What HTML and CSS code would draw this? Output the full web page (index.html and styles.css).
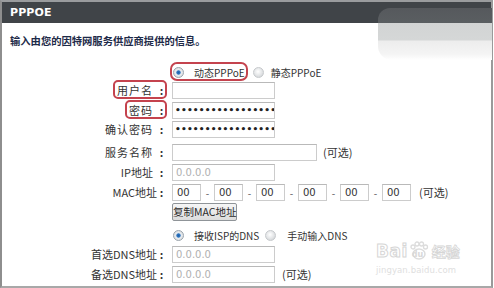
FILE: index.html
```html
<!DOCTYPE html>
<html lang="zh-CN">
<head>
<meta charset="utf-8">
<title>PPPOE</title>
<link rel="stylesheet" href="styles.css">
</head>
<body>
<div class="panel">
  <div class="header">PPPOE</div>
  <div class="intro">输入由您的因特网服务供应商提供的信息。</div>
  <div class="form">
    <div class="label g0"></div>
    <div class="field g0">
      <span class="mark-opt"><span class="radio on"></span><span class="opt first">动态PPPoE</span></span>
      <span class="radio off second"></span><span class="opt">静态PPPoE</span>
    </div>

    <div class="label g0"><span class="mark-l">用户名<span class="colon sp">:</span></span></div>
    <div class="field g0"><div class="box"></div></div>

    <div class="label g2"><span class="mark-l">密码<span class="colon sp">:</span></span></div>
    <div class="field g2"><div class="box dots">•••••••••••••••••</div></div>

    <div class="label g1">确认密码<span class="colon sp">:</span></div>
    <div class="field g1"><div class="box dots">•••••••••••••••••</div></div>

    <div class="label g5">服务名称<span class="colon sp">:</span></div>
    <div class="field g5"><div class="box wide"></div><span class="note">(可选)</span></div>

    <div class="label latin g2">IP地址<span class="colon sp">:</span></div>
    <div class="field g2"><div class="box ph">0.0.0.0</div></div>

    <div class="label latin g2">MAC地址<span class="colon">:</span></div>
    <div class="field g2 mac">
      <div class="box small">00</div><span class="sep">-</span>
      <div class="box small">00</div><span class="sep">-</span>
      <div class="box small">00</div><span class="sep">-</span>
      <div class="box small">00</div><span class="sep">-</span>
      <div class="box small">00</div><span class="sep">-</span>
      <div class="box small">00</div><span class="note mac-note">(可选)</span>
    </div>

    <div class="label g2"></div>
    <div class="field g2"><button class="btn" type="button">复制MAC地址</button></div>

    <div class="label g5"></div>
    <div class="field g5">
      <span class="radio on"></span><span class="opt first">接收ISP的DNS</span>
      <span class="radio off second dns2"></span><span class="opt dns2-label">手动输入DNS</span>
    </div>

    <div class="label latin g1">首选DNS地址<span class="colon">:</span></div>
    <div class="field g1"><div class="box ph">0.0.0.0</div></div>

    <div class="label latin g2">备选DNS地址<span class="colon">:</span></div>
    <div class="field g2"><div class="box ph">0.0.0.0</div><span class="note note-dns">(可选)</span></div>
  </div>

  <div class="blur-top"></div>
  <div class="watermark">
    <div class="wm-logo">
      <span class="wm-bai">Bai</span>
      <svg class="wm-paw" width="20" height="20" viewBox="0 0 20 20">
        <ellipse cx="10" cy="13" rx="6" ry="5" fill="none" stroke="#dcdcdc" stroke-width="1.5"/>
        <circle cx="4" cy="6" r="2" fill="none" stroke="#dcdcdc" stroke-width="1.3"/>
        <circle cx="8" cy="3" r="2" fill="none" stroke="#dcdcdc" stroke-width="1.3"/>
        <circle cx="12.5" cy="3" r="2" fill="none" stroke="#dcdcdc" stroke-width="1.3"/>
        <circle cx="16.5" cy="6" r="2" fill="none" stroke="#dcdcdc" stroke-width="1.3"/>
      </svg>
      <span class="wm-du">du</span>
      <span class="wm-jy">经验</span>
    </div>
    <div class="wm-url">jingyan.baidu.com</div>
  </div>
</div>
</body>
</html>
```
FILE: styles.css
```css
html, body {
  margin: 0;
  padding: 0;
  background: #ffffff;
}

body {
  width: 494px;
  height: 288px;
  overflow: hidden;
  font-family: "Noto Sans CJK SC", "Liberation Sans", sans-serif;
  color: #333333;
}

.panel {
  position: relative;
  width: 489px;
  height: 284px;
  border-left: 2px solid #8e8e8e;
  border-right: 2px solid #9a9a9a;
  border-bottom: 2px solid #a8a8a8;
  border-top: 2px solid #9a9c9e;
  box-sizing: content-box;
}

.header {
  height: 21px;
  background: #404448;
  color: #ffffff;
  font-family: "DejaVu Sans", sans-serif;
  font-weight: bold;
  font-size: 11px;
  line-height: 21px;
  padding-left: 8px;
  letter-spacing: 0.1px;
}

.intro {
  margin-top: 10px;
  padding-left: 8px;
  height: 16px;
  line-height: 16px;
  font-size: 10.3px;
  font-weight: bold;
  color: #1d2a48;
}

.form {
  display: grid;
  grid-template-columns: 164px 1fr;
  column-gap: 6px;
  margin-top: 14px;
}

.label {
  height: 18px;
  line-height: 18px;
  font-size: 11px;
  letter-spacing: 1px;
  text-align: right;
  color: #333;
  white-space: nowrap;
}

.label.latin {
  letter-spacing: 0;
}

.field {
  height: 18px;
  display: flex;
  align-items: center;
  font-size: 11px;
  color: #333;
  white-space: nowrap;
}

.g0 { margin-top: 0; }
.g1 { margin-top: 1px; }
.g2 { margin-top: 2px; }
.g5 { margin-top: 5px; }

.colon {
  display: inline-block;
  width: 9px;
  text-align: center;
  font-weight: bold;
  letter-spacing: 0;
}

.colon.sp {
  margin-left: 4px;
}

.mark-l {
  position: relative;
  display: inline-block;
  padding-left: 3px;
}

.mark-l::after {
  content: "";
  position: absolute;
  left: -1px;
  right: -1px;
  top: -1px;
  bottom: 0;
  border: 2px solid #c4434e;
  border-radius: 5px;
}

.mark-opt {
  position: relative;
  display: inline-flex;
  align-items: center;
  height: 18px;
}

.mark-opt::after {
  content: "";
  position: absolute;
  left: -2px;
  right: -3px;
  top: -1px;
  bottom: 0;
  border: 2px solid #c4434e;
  border-radius: 7px;
}

.radio {
  display: inline-block;
  width: 11px;
  height: 11px;
  border-radius: 50%;
  margin-left: 1px;
  box-sizing: border-box;
  border: 1px solid #b8bcc0;
  background: radial-gradient(circle at 50% 45%, #ffffff 0, #e6e8ea 60%, #cfd3d6 100%);
}

.radio.on {
  background: radial-gradient(circle at 50% 50%, #1d5fa8 0, #2f77c2 28%, #e9ecef 40%, #d3d7db 100%);
  border-color: #9aa3ab;
}

.radio.off {
  border-color: #c6c9cc;
  background: radial-gradient(circle at 45% 40%, #ffffff 0, #e2e4e6 55%, #c9ccce 100%);
}

.opt {
  font-size: 10px;
  color: #333;
}

.opt.first {
  margin-left: 10px;
}

.radio.second {
  margin-left: 8px;
  margin-right: 7px;
}

.radio.dns2 {
  margin-left: 6px;
  margin-right: 11px;
}

.box {
  box-sizing: border-box;
  width: 103px;
  height: 17px;
  border: 1px solid #cccccc;
  border-top-color: #b9b9b9;
  background: #ffffff;
  font-size: 10.5px;
  line-height: 15px;
  padding-left: 3px;
  overflow: hidden;
  white-space: nowrap;
  color: #333;
  font-family: "DejaVu Sans", sans-serif;
}

.box.wide {
  width: 145px;
}

.box.ph {
  color: #b0b0b0;
  font-size: 10px;
}

.box.small {
  width: 29px;
  font-size: 10px;
  padding-left: 4px;
}

.box.dots {
  font-size: 9px;
  letter-spacing: 0.2px;
  color: #222;
  font-weight: bold;
  padding-left: 2px;
}

.sep {
  width: 13px;
  text-align: center;
  font-size: 10px;
  color: #555;
}

.note {
  margin-left: 6px;
  font-size: 11px;
  color: #333;
}

.mac-note {
  margin-left: 8px;
}

.note-dns {
  margin-left: 7px;
}

.btn {
  box-sizing: border-box;
  width: 65px;
  height: 18px;
  padding: 0;
  border: 1px solid #8f9498;
  border-radius: 2px;
  background: linear-gradient(#f6f6f6, #dcdcdc);
  font-family: "Noto Sans CJK SC", "Liberation Sans", sans-serif;
  font-size: 10.5px;
  line-height: 16px;
  color: #2a2a2a;
}

.blur-top {
  position: absolute;
  left: 376px;
  top: 6px;
  width: 114px;
  height: 52px;
  border-radius: 12px 0 0 14px;
  background: linear-gradient(to bottom,
    #56595d 0, #5a5e61 15px,
    #d2d4d4 15px, #d5d7d7 32px,
    #ededed 33px, #f4f4f4 46px, #ffffff 52px);
}

.watermark {
  position: absolute;
  left: 374px;
  top: 238px;
  width: 95px;
  color: #dddddd;
}

.wm-logo {
  display: flex;
  align-items: center;
  height: 22px;
}

.wm-bai {
  font-family: "DejaVu Sans", sans-serif;
  font-weight: bold;
  font-size: 17px;
  color: #ffffff;
  -webkit-text-stroke: 1px #d6d6d6;
  letter-spacing: 0.5px;
}

.wm-paw {
  margin-left: 1px;
}

.wm-du {
  margin-left: -17px;
  margin-top: 7px;
  font-family: "DejaVu Sans", sans-serif;
  font-size: 8px;
  font-weight: bold;
  color: #d8d8d8;
  width: 14px;
}

.wm-jy {
  margin-left: 6px;
  font-size: 14px;
  font-weight: bold;
  color: #ffffff;
  -webkit-text-stroke: 0.8px #d6d6d6;
}

.wm-url {
  font-family: "DejaVu Sans", sans-serif;
  font-size: 8.5px;
  color: #e0e0e0;
  margin-top: 3px;
  letter-spacing: 0.1px;
}
```
